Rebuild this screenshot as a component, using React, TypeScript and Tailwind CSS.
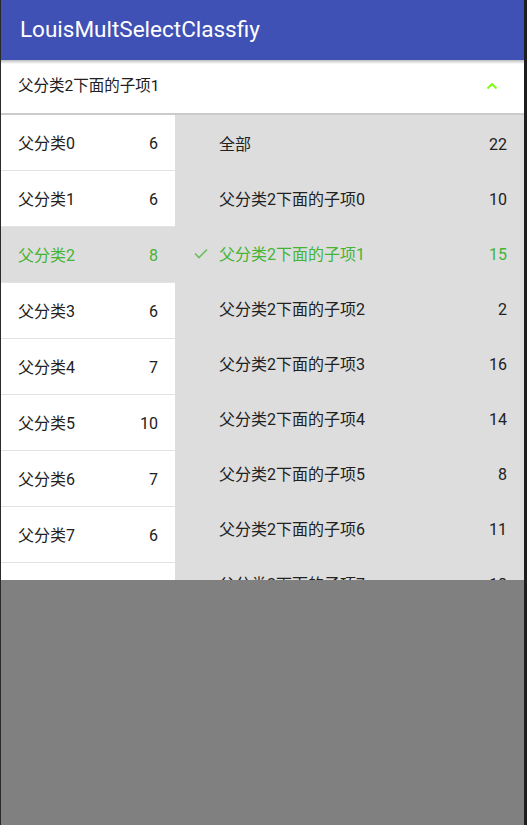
import React from 'react';

const font = { fontFamily: '"Roboto", "Noto Sans CJK SC", sans-serif' };

const parents = [
  { name: '父分类0', count: 6 },
  { name: '父分类1', count: 6 },
  { name: '父分类2', count: 8 },
  { name: '父分类3', count: 6 },
  { name: '父分类4', count: 7 },
  { name: '父分类5', count: 10 },
  { name: '父分类6', count: 7 },
  { name: '父分类7', count: 6 },
  { name: '父分类8', count: 9 },
];

const children = [
  { name: '全部', count: 22 },
  { name: '父分类2下面的子项0', count: 10 },
  { name: '父分类2下面的子项1', count: 15 },
  { name: '父分类2下面的子项2', count: 2 },
  { name: '父分类2下面的子项3', count: 16 },
  { name: '父分类2下面的子项4', count: 14 },
  { name: '父分类2下面的子项5', count: 8 },
  { name: '父分类2下面的子项6', count: 11 },
  { name: '父分类2下面的子项7', count: 18 },
];

const selectedParent = 2;
const selectedChild = 2;

export default function App() {
  return (
    <div className="flex h-[825px] w-[527px] overflow-hidden bg-[#1e1e1e]" style={font}>
      <div className="w-px bg-[#2a2a2a]" />
      <div className="flex w-[523px] flex-col">
        {/* toolbar */}
        <div className="flex h-[60px] items-center bg-[#3f51b5] pl-[19px]">
          <span className="text-[22.5px] text-white">LouisMultSelectClassfiy</span>
        </div>

        {/* current selection */}
        <div className="relative flex h-[55px] items-center justify-between border-b-2 border-[#cbcbcb] bg-white pl-[17px] pr-[26px]">
          <div className="absolute inset-x-0 top-0 h-[4px] bg-gradient-to-b from-[#bdbdbd] to-white" />
          <span className="pt-[1px] text-[15.5px] text-[#212121]">父分类2下面的子项1</span>
          <svg width="12" height="8" viewBox="0 0 12 8" className="mb-[1px]">
            <path d="M1.5 6.5 L6 2 L10.5 6.5" fill="none" stroke="#76ff03" strokeWidth="1.8" />
          </svg>
        </div>

        {/* lists */}
        <div className="flex h-[465px] overflow-hidden">
          <div className="flex w-[174px] flex-col bg-white">
            {parents.map((p, i) => (
              <div
                key={p.name}
                className={`flex h-[56px] shrink-0 items-center justify-between border-b border-[#e3e3e3] pl-[17px] pr-[17px] pt-[3px] text-[16px] ${
                  i === selectedParent ? 'bg-[#dddddd] text-[#45b433]' : 'text-[#212121]'
                }`}
              >
                <span>{p.name}</span>
                <span>{p.count}</span>
              </div>
            ))}
          </div>
          <div className="flex flex-1 flex-col bg-[#dddddd] pt-[2px]">
            {children.map((c, i) => (
              <div
                key={c.name}
                className={`flex h-[55px] shrink-0 items-center text-[16px] ${
                  i === selectedChild ? 'text-[#45b433]' : 'text-[#212121]'
                }`}
              >
                <div className="flex w-[44px] justify-end pr-[11px]">
                  {i === selectedChild && (
                    <svg width="14" height="11" viewBox="0 0 14 11" className="mb-[2px]">
                      <path d="M1 5.5 L5 9.5 L13 1.5" fill="none" stroke="#6cbf5c" strokeWidth="1.6" />
                    </svg>
                  )}
                </div>
                <span className="flex-1">{c.name}</span>
                <span className="pr-[17px]">{c.count}</span>
              </div>
            ))}
          </div>
        </div>

        {/* dimmed area */}
        <div className="flex-1 bg-[#808080]" />
      </div>
      <div className="w-[3px] bg-[#1e1e1e]" />
    </div>
  );
}
